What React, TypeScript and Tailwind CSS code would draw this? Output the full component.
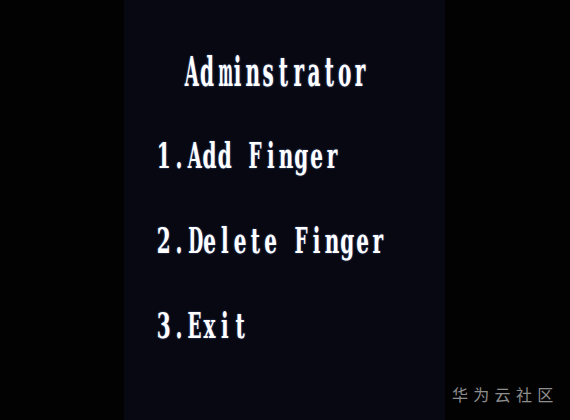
const SQUEEZE: Record<string, string> = {
  m: "inline-block scale-x-[0.68]",
  D: "inline-block scale-x-[0.86]",
  A: "inline-block scale-x-[0.9]",
  E: "inline-block scale-x-[0.92]",
  F: "inline-block scale-x-[0.92]",
};

function Cells({ text }: { text: string }) {
  return (
    <>
      {text.split("").map((c, i) => (
        <span key={i} className="inline-block w-[15.3px] text-center whitespace-pre">
          <span className={SQUEEZE[c] ?? "inline-block"}>{c}</span>
        </span>
      ))}
    </>
  );
}

export default function App() {
  const serif = { fontFamily: '"DejaVu Serif", "Liberation Serif", serif' };
  const glow = "[text-shadow:0_0_1.5px_rgba(120,160,255,0.6)]";
  return (
    <div className="w-[570px] h-[420px] bg-[#020204] flex overflow-hidden">
      <div className="w-[124px] h-full bg-[#020203]" />
      <div className="w-[321px] h-full bg-[#070811] flex flex-col pt-[57px]" style={serif}>
        <div className={`h-[30px] leading-[30px] text-[20px] font-bold text-white whitespace-nowrap pl-[60px] origin-center scale-y-[2.05] ${glow}`}>
          <Cells text="Adminstrator" />
        </div>
        <div className={`mt-[54px] h-[30px] leading-[30px] text-[20px] font-bold text-white whitespace-nowrap pl-[32px] origin-center scale-y-[1.78] ${glow}`}>
          <Cells text="1.Add Finger" />
        </div>
        <div className={`mt-[55px] h-[30px] leading-[30px] text-[20px] font-bold text-white whitespace-nowrap pl-[32px] origin-center scale-y-[1.78] ${glow}`}>
          <Cells text="2.Delete Finger" />
        </div>
        <div className={`mt-[55px] h-[30px] leading-[30px] text-[20px] font-bold text-white whitespace-nowrap pl-[32px] origin-center scale-y-[1.78] ${glow}`}>
          <Cells text="3.Exit" />
        </div>
      </div>
      <div className="flex-1 h-full bg-[#020203] flex flex-col justify-end pb-[16px] pl-[7px]">
        <div
          className="text-[16px] leading-[20px] text-[#8e8e8e] tracking-[5.3px] whitespace-nowrap"
          style={{ fontFamily: '"Noto Sans CJK SC", "Noto Sans", sans-serif' }}
        >
          华为云社区
        </div>
      </div>
    </div>
  );
}
